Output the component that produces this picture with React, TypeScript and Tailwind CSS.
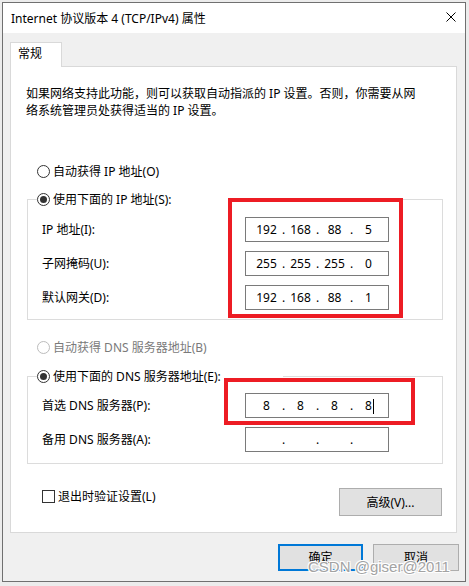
import React from 'react';

const font = { fontFamily: '"Noto Sans", "Noto Sans CJK SC", sans-serif' };

const Radio = ({ checked = false, disabled = false, label }: { checked?: boolean; disabled?: boolean; label: string }) => (
  <div className="flex items-center h-[17px] gap-[3px] whitespace-nowrap">
    <div
      className={`w-[13px] h-[13px] rounded-full border bg-white flex items-center justify-center ${
        disabled ? 'border-[#bcbcbc]' : 'border-[#333333]'
      }`}
    >
      {checked && <div className="w-[7px] h-[7px] rounded-full bg-[#333333]" />}
    </div>
    <span className={disabled ? 'text-[#7a7a7a]' : 'text-black'}>{label}</span>
  </div>
);

const IpBox = ({ parts, caret = false }: { parts: string[]; caret?: boolean }) => (
  <div className="w-[144px] h-[25px] border border-[#7a7a7a] bg-white flex items-center pl-[6px]">
    {parts.map((p, i) => (
      <React.Fragment key={i}>
        {i > 0 && <span className="w-[5px] text-center">.</span>}
        <span className="w-[29px] text-center relative">
          {p}
          {caret && i === 3 && (
            <span className="absolute left-[19px] top-[2px] w-px h-[15px] bg-black" />
          )}
        </span>
      </React.Fragment>
    ))}
  </div>
);

const Row = ({ label, children }: { label: string; children: React.ReactNode }) => (
  <div className="flex items-center h-[25px] ml-[14px]">
    <span className="w-[203px] whitespace-nowrap">{label}</span>
    {children}
  </div>
);

const App = () => {
  return (
    <div className="w-[469px] h-[586px] bg-[#ececec] pt-[2px] pl-[2px] text-[12px] text-black" style={font}>
      <div className="relative w-[464px] h-[580px] border border-[#707070] bg-[#f0f0f0] flex flex-col">
        {/* Title bar */}
        <div className="h-[30px] bg-white flex items-center pl-[8px] pr-[9px]">
          <span className="flex-1 leading-[17px]">Internet 协议版本 4 (TCP/IPv4) 属性</span>
          <svg width="10" height="10" viewBox="0 0 10 10" className="mb-[2px]">
            <path d="M0.5 0.5 L9.5 9.5 M9.5 0.5 L0.5 9.5" stroke="#000" strokeWidth="1" fill="none" />
          </svg>
        </div>

        {/* Tab */}
        <div className="pt-[9px] pl-[7px]">
          <div className="relative z-10 w-[52px] h-[25px] -mb-px bg-white border border-b-0 border-[#d9d9d9] pl-[7px] pt-[2px] leading-[17px]">
            常规
          </div>
          <div className="relative w-[447px] h-[467px] bg-white border border-[#d9d9d9]">
            <p className="pl-[15px] pt-[18px] leading-[17px] whitespace-nowrap">
              如果网络支持此功能，则可以获取自动指派的 IP 设置。否则，你需要从网
              <br />
              络系统管理员处获得适当的 IP 设置。
            </p>

            <div className="mt-[44px] ml-[26px]">
              <Radio label="自动获得 IP 地址(O)" />
            </div>

            <fieldset className="mt-[11px] ml-[16px] w-[416px] border border-[#dcdcdc] pt-[9px] pb-[9px] flex flex-col gap-[9px]">
              <legend className="ml-[9px] w-[246px] h-[17px] p-0">
                <Radio checked label="使用下面的 IP 地址(S):" />
              </legend>
              <Row label="IP 地址(I):">
                <IpBox parts={['192', '168', '88', '5']} />
              </Row>
              <Row label="子网掩码(U):">
                <IpBox parts={['255', '255', '255', '0']} />
              </Row>
              <Row label="默认网关(D):">
                <IpBox parts={['192', '168', '88', '1']} />
              </Row>
            </fieldset>

            <div className="mt-[19px] ml-[26px]">
              <Radio disabled label="自动获得 DNS 服务器地址(B)" />
            </div>

            <fieldset className="mt-[12px] ml-[16px] w-[416px] border border-[#dcdcdc] pt-[8px] pb-[11px] flex flex-col gap-[9px]">
              <legend className="ml-[9px] w-[246px] h-[17px] p-0">
                <Radio checked label="使用下面的 DNS 服务器地址(E):" />
              </legend>
              <Row label="首选 DNS 服务器(P):">
                <IpBox parts={['8', '8', '8', '8']} caret />
              </Row>
              <Row label="备用 DNS 服务器(A):">
                <IpBox parts={['', '', '', '']} />
              </Row>
            </fieldset>

            <div className="mt-[24px] ml-[31px] mr-[14px] flex items-start justify-between">
              <div className="flex items-center h-[17px] gap-[3px]">
                <div className="w-[13px] h-[13px] border border-[#333333] bg-white" />
                <span>退出时验证设置(L)</span>
              </div>
              <button className="w-[103px] h-[28px] bg-[#e1e1e1] border border-[#adadad] leading-[17px]">
                高级(V)...
              </button>
            </div>

            {/* annotation boxes */}
            <div className="absolute left-[217px] top-[131px] w-[175px] h-[120px] border-4 border-[#ed1c24]" />
            <div className="absolute left-[213px] top-[311px] w-[191px] h-[47px] border-4 border-[#ed1c24]" />
          </div>
        </div>

        {/* Dialog buttons */}
        <div className="mt-[11px] pr-[6px] flex justify-end gap-[10px]">
          <button className="w-[85px] h-[27px] bg-[#e1e1e1] border-2 border-[#0078d7] leading-[17px]">确定</button>
          <button className="w-[86px] h-[27px] bg-[#e1e1e1] border border-[#adadad] leading-[17px]">取消</button>
        </div>

        <div
          className="absolute left-[305px] top-[555px] text-[15px] leading-[17px] text-[#a3a3a3] whitespace-nowrap [text-shadow:1px_1px_0_#ffffff,-1px_-1px_0_#ffffff,1px_-1px_0_#ffffff,-1px_1px_0_#ffffff]"
          style={{ fontFamily: '"Liberation Sans", Arial, sans-serif' }}
        >
          CSDN @giser@2011
        </div>
      </div>
    </div>
  );
};

export default App;
